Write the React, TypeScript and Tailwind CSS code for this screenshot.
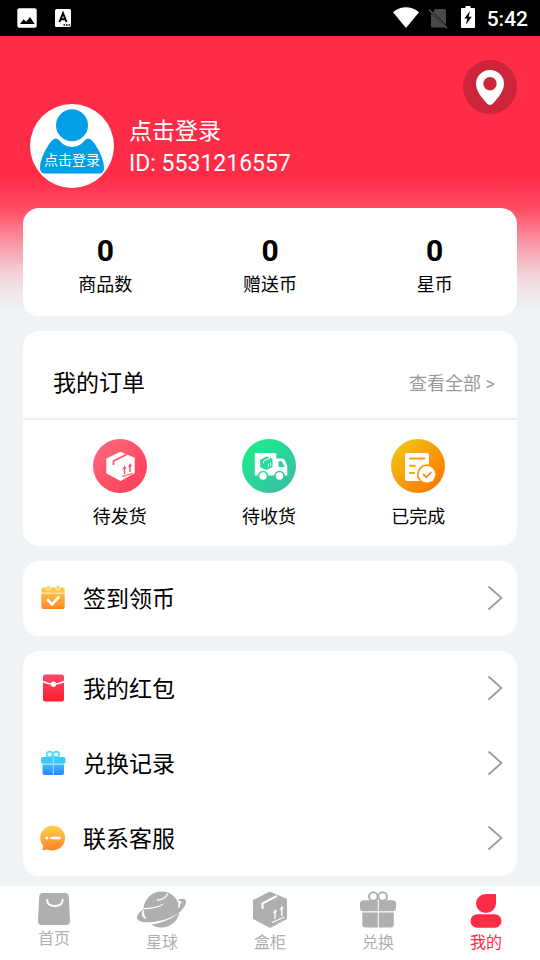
import type { ReactNode } from 'react'

function ImageIcon() {
  return (
    <svg viewBox="0 0 20 20" className="h-5 w-5" aria-hidden="true">
      <rect x="0.3" y="0.3" width="19.4" height="19.4" rx="2" fill="#fff" />
      <path d="M3 16l3.6-4.8 2.5 2.6 3.9-4.8 4.6 7z" fill="#000" />
    </svg>
  )
}

function KeyboardIcon() {
  return (
    <svg viewBox="0 0 16 18" className="h-[18px] w-4" aria-hidden="true">
      <rect width="16" height="18" rx="1.5" fill="#fff" />
      <path d="M4.5 13L8 4.2l3.5 8.8M5.8 10.3h4.4" fill="none" stroke="#000" strokeWidth="2" />
      <path d="M8.5 15.2h1.6v1.6H8.5zM11 15.2h1.6v1.6H11zM13.5 15.2h1.6v1.6h-1.6z" fill="#000" />
    </svg>
  )
}

function StatusBar() {
  return (
    <div className="flex h-9 items-center justify-between bg-black pr-3 pl-[17px] text-white">
      <div className="flex items-center gap-[18px]">
        <ImageIcon />
        <KeyboardIcon />
      </div>
      <div className="flex items-center">
        <svg viewBox="0 0 26 21" className="mb-0.5 h-[21px] w-[26px]" aria-hidden="true">
          <path d="M0 5.3C7.5-1.4 18.5-1.4 26 5.3L13 21z" fill="#fff" />
        </svg>
        <svg viewBox="0 0 20 21" className="ml-[9px] h-[21px] w-5" aria-hidden="true">
          <path d="M7 1h9.5q1.5 0 1.5 1.5V17L5 4zM3 5.500L17 19.500H4.500Q3 19.500 3 18z" fill="#4a4a4a" />
          <path d="M1 1.800L19 20.300" stroke="#555" strokeWidth="1.600" />
        </svg>
        <svg viewBox="0 0 14 22" className="mr-3 mb-0.5 ml-[13px] h-[22px] w-3.5" aria-hidden="true">
          <path d="M4.500 0h5v2H13q1 0 1 1v18q0 1-1 1H1q-1 0-1-1V3q0-1 1-1h3.500z" fill="#fff" />
          <path d="M9 5L3.300 12.500h3L5 18.800l5.800-8H7.600z" fill="#000" />
        </svg>
        <span className="pt-0.5 text-[21px] leading-6 font-medium">5:42</span>
      </div>
    </div>
  )
}

function Avatar() {
  return (
    <svg viewBox="0 0 84 84" className="h-[84px] w-[84px] shrink-0" role="img" aria-label="头像">
      <circle cx="42" cy="42" r="42" fill="#fff" />
      <circle cx="42" cy="21.3" r="16" fill="#039fe6" />
      <path d="M25.5 34.5q2.5 0 4.5 2.8Q35 43 42 43t12-5.7q2-2.8 4.5-2.8 3.5.8 7 6.5Q74 54 74 64q0 5.5-5 5.5H15q-5 0-5-5.5 0-10 8.500-23 3.500-5.700 7-6.500z" fill="#039fe6" />
      <text x="42" y="61" textAnchor="middle" fontSize="14" fill="#fff">点击登录</text>
    </svg>
  )
}

function PendingIcon() {
  return (
    <svg viewBox="0 0 54 54" className="h-[54px] w-[54px]" aria-hidden="true">
      <linearGradient id="pending" x1="0" y1="0" x2="1" y2="1">
        <stop stopColor="#ff6b7f" />
        <stop offset="1" stopColor="#ff3a54" />
      </linearGradient>
      <circle cx="27" cy="27" r="27" fill="url(#pending)" />
      <path d="M27.5 12.8L41.700 18.700v15.500L27.500 42 13.300 34.300V19.500z" fill="#fff" />
      <path d="M20.500 26v-4L33.500 15.500" fill="none" stroke="#ff586d" strokeWidth="1.800" />
      <path d="M31.500 35v-6M37 33v-6" fill="none" stroke="#ff4e65" strokeWidth="1.500" />
      <path d="M29.500 30.500l2-4 2 2.800zM35 28.200l2-4 2 2.500z" fill="#ff4e65" />
      <path d="M29 37.500l10.500-3" fill="none" stroke="#ff4e65" strokeWidth="1.200" />
    </svg>
  )
}

function ShippedIcon() {
  return (
    <svg viewBox="0 0 54 54" className="h-[54px] w-[54px]" aria-hidden="true">
      <linearGradient id="shipped" x1="0" y1="0" x2="1" y2="1">
        <stop offset="0.15" stopColor="#1eea8c" />
        <stop offset="1" stopColor="#3cb7ac" />
      </linearGradient>
      <circle cx="27" cy="27" r="27" fill="url(#shipped)" />
      <path d="M13.500 14h19.800q1 0 1 1v4.500h6q1.500 0 2.300 1.500l2.700 6v9.500H12.800V15q0-1 .7-1z" fill="#fff" />
      <path d="M36.500 22.300h3.300l3 5.700h-6.300z" fill="#2dd09a" />
      <circle cx="21" cy="37" r="5.300" fill="#28d896" />
      <circle cx="37.500" cy="37" r="5.300" fill="#32c8a1" />
      <circle cx="21" cy="37" r="3.700" fill="#fff" />
      <circle cx="37.500" cy="37" r="3.700" fill="#fff" />
      <path d="M24.500 17.500L30.500 20v8L24.500 31l-6.300-2.800V20.800z" fill="#25da95" />
      <path d="M28 19.200L21.500 22v2.500M26.200 28v-3.500M28.600 27v-3.500" fill="none" stroke="#fff" strokeWidth="1" />
    </svg>
  )
}

function DoneIcon() {
  return (
    <svg viewBox="0 0 54 54" className="h-[54px] w-[54px]" aria-hidden="true">
      <linearGradient id="done" x1="0" y1="0" x2="1" y2="1">
        <stop offset="0.1" stopColor="#f1c511" />
        <stop offset="0.9" stopColor="#ff7604" />
      </linearGradient>
      <circle cx="27" cy="27" r="27" fill="url(#done)" />
      <rect x="14" y="14" width="24" height="28" rx="2" fill="#fff" />
      <path d="M19 19.500h14.500M19 26.700h5M19 34h4" stroke="#f9a10b" strokeWidth="2" strokeLinecap="round" />
      <circle cx="36" cy="35.300" r="10" fill="#fb900a" />
      <circle cx="36" cy="35.300" r="8.300" fill="#fff" />
      <path d="M32 35l3.300 3.300 5-5.300" fill="none" stroke="#fb8d0a" strokeWidth="1.800" />
    </svg>
  )
}

function CalendarIcon() {
  return (
    <svg viewBox="0 0 26 26" className="h-[26px] w-[26px]" aria-hidden="true">
      <linearGradient id="calendar" x1="0" y1="0" x2="0" y2="1">
        <stop stopColor="#fbbd40" />
        <stop offset="1" stopColor="#ff8528" />
      </linearGradient>
      <path d="M1.300 8.600h23.400V22q0 2-2 2H3.300q-2 0-2-2z" fill="url(#calendar)" />
      <path d="M3.300 2.500h19.400q2 0 2 2v3.300H1.300V4.500q0-2 2-2z" fill="#fbc64a" />
      <rect x="6.300" y="0.500" width="3.800" height="5" rx="1.900" fill="#fbd75d" stroke="#fff" strokeWidth="0.600" />
      <rect x="16" y="0.500" width="3.800" height="5" rx="1.900" fill="#fbd75d" stroke="#fff" strokeWidth="0.600" />
      <path d="M8 15.300l4 4 6.500-7" fill="none" stroke="#fff" strokeWidth="2.700" strokeLinecap="round" />
    </svg>
  )
}

function EnvelopeIcon() {
  return (
    <svg viewBox="0 0 26 28" className="h-7 w-[26px]" aria-hidden="true">
      <linearGradient id="envelope" x1="0" y1="0" x2="0" y2="1">
        <stop stopColor="#f9476f" />
        <stop offset="1" stopColor="#ff2029" />
      </linearGradient>
      <rect x="3" y="0.500" width="21" height="27" rx="2.500" fill="url(#envelope)" />
      <path d="M3 7.500Q13.500 13 24 7.500" fill="none" stroke="#fff" strokeWidth="1.500" />
      <circle cx="13.500" cy="10.200" r="2.600" fill="#fff" />
    </svg>
  )
}

function GiftIcon() {
  return (
    <svg viewBox="0 0 26 26" className="h-[26px] w-[26px]" aria-hidden="true">
      <linearGradient id="gift" x1="0" y1="0" x2="0" y2="1">
        <stop stopColor="#3dbcfa" />
        <stop offset="1" stopColor="#2485ff" />
      </linearGradient>
      <circle cx="9.700" cy="4.500" r="2.900" fill="none" stroke="#4de0ef" strokeWidth="1.600" />
      <circle cx="16.300" cy="4.500" r="2.900" fill="none" stroke="#4de0ef" strokeWidth="1.600" />
      <rect x="1" y="7" width="24.500" height="6.700" rx="2" fill="#3dc9fb" />
      <path d="M2.500 14.500H24V23q0 2-2 2H4.500q-2 0-2-2z" fill="url(#gift)" />
      <path d="M13.300 7v18" stroke="#a5ddff" strokeWidth="1" />
    </svg>
  )
}

function ChatIcon() {
  return (
    <svg viewBox="0 0 26 26" className="h-[26px] w-[26px]" aria-hidden="true">
      <linearGradient id="chat" x1="0" y1="0" x2="0" y2="1">
        <stop stopColor="#fbd44b" />
        <stop offset="1" stopColor="#ff8229" />
      </linearGradient>
      <path d="M13 .5A12.500 12.500 0 1 1 7 24.200q-2 1.500-4.800.600 1-1.500.8-4A12.500 12.500 0 0 1 13 .5z" fill="url(#chat)" />
      <circle cx="6.800" cy="13" r="1.500" fill="#fff" />
      <path d="M11.500 13h8" stroke="#fff" strokeWidth="2.600" strokeLinecap="round" />
    </svg>
  )
}

function Chevron() {
  return (
    <svg viewBox="0 0 16 26" className="h-[26px] w-4" aria-hidden="true">
      <path d="M1.500 1.500L14.500 13l-13 11.500" fill="none" stroke="#999" strokeWidth="1.700" />
    </svg>
  )
}

function BagTab() {
  return (
    <svg viewBox="0 0 32 32" className="mt-[3px] h-8 w-8" aria-hidden="true">
      <path d="M5 0h22q3.500 0 3.800 3.500L32 28q0 4-4 4H4q-4 0-4-4L1.200 3.500Q1.500 0 5 0z" fill="currentColor" />
      <path d="M9 6q0 7 7.800 7T24.800 6" fill="none" stroke="#fff" strokeWidth="2" />
    </svg>
  )
}

function PlanetTab() {
  return (
    <svg viewBox="0 0 50 38" className="mt-px h-[38px] w-[50px]" aria-hidden="true">
      <circle cx="24.500" cy="18.500" r="18" fill="currentColor" />
      {/* gap under the ring */}
      <path d="M8 32C22 32 38 26 45 15" fill="none" stroke="#fff" strokeWidth="3.500" />
      <path d="M41.500 8.300Q49 6.500 49 11C48 20 36 27 22 30 10 32.300 1 31.500 0 27Q0 22 6.500 18.500 4 23 6 25.500L12 27 36 20Q43 14 44.800 11 44.800 9.800 42 10.300z" fill="currentColor" />
      <path d="M7 17.700c7 0 14-1.400 19-4.400M20 9c5 0 9.500-2.500 10.500-6.500" fill="none" stroke="#fff" strokeWidth="1.300" />
      <path d="M6.500 20q-2 5 2.500 7.300M42.300 12.500q.5 2-1 4" fill="none" stroke="#fff" strokeWidth="1.500" />
    </svg>
  )
}

function BoxTab() {
  return (
    <svg viewBox="0 0 34 38" className="mt-px h-[38px] w-[34px]" aria-hidden="true">
      <path d="M17 .5L34 8v20L17 37 0 28V9z" fill="currentColor" />
      <path d="M24 5L9.500 12.300V18" fill="none" stroke="#fff" strokeWidth="2" />
      <path d="M22 28v-7M28.700 25v-7" fill="none" stroke="#fff" strokeWidth="1.400" />
      <path d="M19.800 22.500l2.200-4.500 2.200 3zM26.500 19.300l2.200-4.500 2.200 3z" fill="#fff" />
      <path d="M19 31.500l12.500-5.500" fill="none" stroke="#fff" strokeWidth="1.100" />
    </svg>
  )
}

function GiftTab() {
  return (
    <svg viewBox="0 0 36 38" className="mt-px h-[38px] w-9" aria-hidden="true">
      <circle cx="13.300" cy="5.500" r="4.300" fill="none" stroke="currentColor" strokeWidth="2" />
      <circle cx="22.700" cy="5.500" r="4.300" fill="none" stroke="currentColor" strokeWidth="2" />
      <rect y="9.300" width="36" height="11" rx="3.500" fill="currentColor" />
      <path d="M2.300 21.500h31.500V33q0 3.500-3.500 3.500H5.800q-3.500 0-3.500-3.500z" fill="currentColor" />
      <path d="M18.300 9v28" stroke="#fff" strokeWidth="1" />
    </svg>
  )
}

function MeTab() {
  return (
    <svg viewBox="0 0 32 38" className="mt-px h-[38px] w-8" aria-hidden="true">
      <path d="M16 3h10v9.500A10 9.500 0 1 1 16 3z" fill="currentColor" />
      <rect x="0.500" y="23.300" width="31" height="13.500" rx="6.700" fill="currentColor" />
    </svg>
  )
}

const stats = [
  { label: '商品数', value: 0 },
  { label: '赠送币', value: 0 },
  { label: '星币', value: 0 },
]

const orders = [
  { label: '待发货', icon: <PendingIcon /> },
  { label: '待收货', icon: <ShippedIcon /> },
  { label: '已完成', icon: <DoneIcon /> },
]

const tabs = [
  { label: '首页', icon: <BagTab /> },
  { label: '星球', icon: <PlanetTab /> },
  { label: '盒柜', icon: <BoxTab /> },
  { label: '兑换', icon: <GiftTab /> },
  { label: '我的', icon: <MeTab />, active: true },
]

function MenuRow({ icon, label }: { icon: ReactNode; label: string }) {
  return (
    <a href="#" className="flex h-[75px] items-center pr-3.5 pb-0.5 pl-[17px]">
      {icon}
      <span className="ml-[17px] flex-1 pt-1 text-[23px] leading-8">{label}</span>
      <Chevron />
    </a>
  )
}

export default function App() {
  return (
    <div className="flex min-h-screen flex-col bg-[#f0f4f7] font-[Roboto,'Noto_Sans_CJK_SC',sans-serif] text-black">
      <StatusBar />

      <main className="flex-1 bg-[linear-gradient(#ff2c47_140px,#ff4a62_172px,#f98c9c_202px,#f3c8d0_232px,#f1e2e7_252px,#f0f2f5_275px)] bg-[length:100%_275px] bg-no-repeat px-[23px] pb-2.5">
        {/* Profile */}
        <header className="flex items-start justify-between pt-6 pb-5">
          <a href="#" className="flex items-center pt-11 pl-[7px] text-[23px] leading-8 text-white">
            <Avatar />
            <div className="ml-[15px] pt-1">
              <p>点击登录</p>
              <p>ID: 5531216557</p>
            </div>
          </a>
          <button type="button" aria-label="地址" className="flex h-[54px] w-[54px] items-center justify-center rounded-full bg-[#cc2439]">
            <svg viewBox="0 0 28 35" className="h-[35px] w-7" aria-hidden="true">
              <path fillRule="evenodd" d="M14 0a14 14 0 0 1 14 14c0 7-6 14-11.500 20q-2.500 2-5 0C6 28 0 21 0 14A14 14 0 0 1 14 0zm0 7a6.700 6.700 0 1 0 0 13.400A6.700 6.700 0 0 0 14 7z" fill="#fff" />
            </svg>
          </button>
        </header>

        <div className="space-y-[15px]">
          <section className="grid h-[108px] grid-cols-3 rounded-2xl bg-white pt-[25px] text-center">
            {stats.map(s => (
              <div key={s.label}>
                <p className="text-[30px] leading-9 font-bold">{s.value}</p>
                <p className="mt-1 text-lg leading-6">{s.label}</p>
              </div>
            ))}
          </section>

          {/* Orders */}
          <section className="rounded-2xl bg-white">
            <div className="flex items-center justify-between border-b-2 border-[#eee] pt-[35px] pr-[22px] pb-4 pl-[30px]">
              <h2 className="text-[23px] leading-9">我的订单</h2>
              <a href="#" className="text-lg leading-6 text-[#999]">查看全部 &gt;</a>
            </div>
            <div className="grid grid-cols-3 pt-[19px] pr-6 pb-[17px] pl-[22px]">
              {orders.map(o => (
                <a key={o.label} href="#" className="flex flex-col items-center">
                  {o.icon}
                  <span className="mt-3 text-lg leading-6">{o.label}</span>
                </a>
              ))}
            </div>
          </section>

          <section className="rounded-2xl bg-white">
            <MenuRow icon={<CalendarIcon />} label="签到领币" />
          </section>

          <section className="rounded-2xl bg-white">
            <MenuRow icon={<EnvelopeIcon />} label="我的红包" />
            <MenuRow icon={<GiftIcon />} label="兑换记录" />
            <MenuRow icon={<ChatIcon />} label="联系客服" />
          </section>
        </div>
      </main>

      {/* Tab bar */}
      <nav className="sticky bottom-0 grid h-[74px] grid-cols-5 bg-white pt-1">
        {tabs.map(t => (
          <a key={t.label} href="#" className={`flex flex-col items-center gap-0.5 text-base leading-6 ${t.active ? 'text-[#ff2c47]' : 'text-[#afafaf]'}`}>
            {t.icon}
            {t.label}
          </a>
        ))}
      </nav>
    </div>
  )
}
